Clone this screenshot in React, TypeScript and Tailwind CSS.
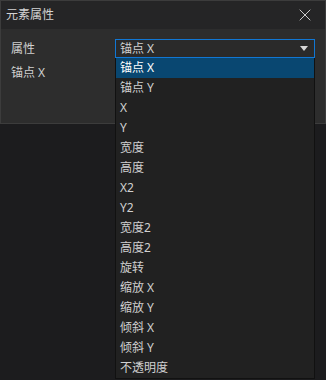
import { X } from 'lucide-react'

const options = [
  '锚点 X',
  '锚点 Y',
  'X',
  'Y',
  '宽度',
  '高度',
  'X2',
  'Y2',
  '宽度2',
  '高度2',
  '旋转',
  '缩放 X',
  '缩放 Y',
  '倾斜 X',
  '倾斜 Y',
  '不透明度',
]

export default function App() {
  const selected = 0

  return (
    <div
      className="relative h-[380px] w-[326px] overflow-hidden bg-[#1c1c1e] text-[12px] text-[#d0d0d0]"
      style={{ fontFamily: '"Noto Sans", "Noto Sans CJK SC", sans-serif' }}
    >
      <div className="w-[326px] border border-[#3c3c3c] bg-[#2d2d2d]">
        <div className="flex h-[28px] items-center justify-between bg-[#252526] pl-[5px] pr-[10px]">
          <span className="text-[12px] text-[#d4d4d4]">元素属性</span>
          <X size={20} strokeWidth={1.2} className="text-[#cccccc]" />
        </div>

        <div className="flex h-[94px] flex-col gap-[5px] pt-[10px] pl-[10px] pr-[10px]">
          <div className="flex h-[19px] items-center">
            <span className="w-[104px]">属性</span>
            <div className="flex h-[19px] w-[200px] items-center justify-between border border-[#1177d4] bg-[#2a2a2a] pl-[4px] pr-[6px]">
              <span>锚点 X</span>
              <svg width="8" height="5" viewBox="0 0 8 5">
                <path d="M0 0 L8 0 L4 5 Z" fill="#d8d8d8" />
              </svg>
            </div>
          </div>
          <div className="flex h-[20px] items-center">
            <span>锚点 X</span>
          </div>
        </div>
      </div>

      <ul className="absolute left-[115px] top-[58px] w-[200px] border border-[#111111] border-t-0 bg-[#212121]">
        {options.map((o, i) => (
          <li
            key={o}
            className={
              i === selected
                ? 'flex h-[20px] items-center bg-[#094771] pl-[4px] text-white'
                : 'flex h-[20px] items-center pl-[4px]'
            }
          >
            {o}
          </li>
        ))}
      </ul>
    </div>
  )
}
